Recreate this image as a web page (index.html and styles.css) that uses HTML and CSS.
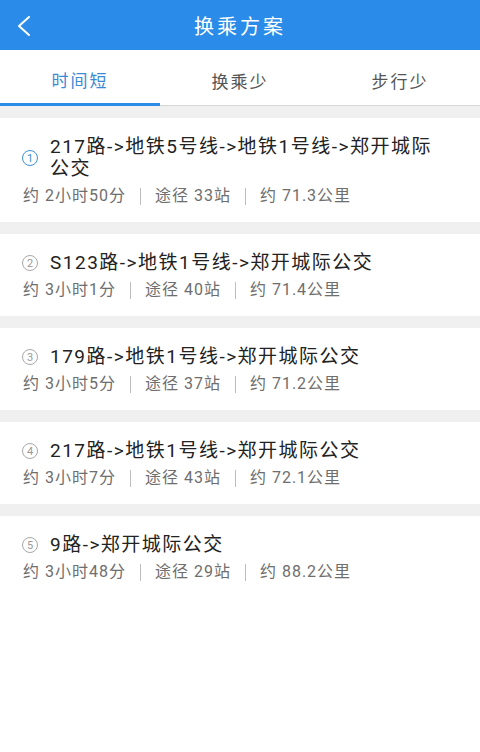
FILE: index.html
```html
<!DOCTYPE html>
<html>
  <head>
    <meta charset="UTF-8" />
    <title>换乘方案</title>
    <link rel="stylesheet" href="styles.css">
  </head>
  <body>
    <div class="header">
      <div class="back">
        <svg width="16" height="22" viewBox="0 0 16 22">
          <polyline points="13,2 3,11 13,20" fill="none" stroke="#fff" stroke-width="2" stroke-linecap="round" stroke-linejoin="round" />
        </svg>
      </div>
      <h1>换乘方案</h1>
      <div></div>
    </div>

    <div class="tabs">
      <div class="tab active">时间短</div>
      <div class="tab">换乘少</div>
      <div class="tab">步行少</div>
    </div>

    <div class="plans">
      <div class="card">
        <div class="route">
          <span class="num first">1</span>
          <span class="title">217路->地铁5号线->地铁1号线->郑开城际公交</span>
        </div>
        <div class="meta">
          <span>约 2小时50分</span><span class="sep"></span><span>途径 33站</span><span class="sep"></span><span>约 71.3公里</span>
        </div>
      </div>

      <div class="card">
        <div class="route">
          <span class="num">2</span>
          <span class="title">S123路->地铁1号线->郑开城际公交</span>
        </div>
        <div class="meta">
          <span>约 3小时1分</span><span class="sep"></span><span>途径 40站</span><span class="sep"></span><span>约 71.4公里</span>
        </div>
      </div>

      <div class="card">
        <div class="route">
          <span class="num">3</span>
          <span class="title">179路->地铁1号线->郑开城际公交</span>
        </div>
        <div class="meta">
          <span>约 3小时5分</span><span class="sep"></span><span>途径 37站</span><span class="sep"></span><span>约 71.2公里</span>
        </div>
      </div>

      <div class="card">
        <div class="route">
          <span class="num">4</span>
          <span class="title">217路->地铁1号线->郑开城际公交</span>
        </div>
        <div class="meta">
          <span>约 3小时7分</span><span class="sep"></span><span>途径 43站</span><span class="sep"></span><span>约 72.1公里</span>
        </div>
      </div>

      <div class="card">
        <div class="route">
          <span class="num">5</span>
          <span class="title">9路->郑开城际公交</span>
        </div>
        <div class="meta">
          <span>约 3小时48分</span><span class="sep"></span><span>途径 29站</span><span class="sep"></span><span>约 88.2公里</span>
        </div>
      </div>
    </div>
  </body>
</html>
```

FILE: styles.css
```css
body {
  margin: 0;
  background-color: #fff;
  font-family: Roboto, "Noto Sans CJK SC", sans-serif;
}

.header {
  display: grid;
  grid-template-columns: 1fr auto 1fr;
  align-items: center;
  height: 50px;
  background-color: #2a8ce8;
}

.header .back {
  display: flex;
  padding-left: 16px;
  padding-top: 2px;
}

.header h1 {
  margin: 0;
  color: #fff;
  font-size: 20px;
  font-weight: normal;
  letter-spacing: 3px;
}

.tabs {
  display: flex;
  background-color: #fff;
}

.tab {
  flex: 1;
  height: 56px;
  box-sizing: border-box;
  padding-top: 5px;
  display: flex;
  align-items: center;
  justify-content: center;
  font-size: 17px;
  letter-spacing: 2px;
  color: #555;
  border-bottom: 1px solid #d6d6d6;
}

.tab.active {
  color: #3b8ad6;
  border-bottom: 3px solid #2a8ce8;
}

.plans {
  background-color: #f0f0f0;
  padding-top: 12px;
}

.card {
  background-color: #fff;
  margin-bottom: 12px;
  padding: 18px 36px 16px 22px;
}

.route {
  display: flex;
  align-items: center;
  gap: 12px;
}

.num {
  flex: none;
  width: 14px;
  height: 14px;
  border: 1.5px solid #a8a8a8;
  border-radius: 50%;
  display: flex;
  align-items: center;
  justify-content: center;
  font-size: 11px;
  line-height: 1;
  color: #999;
}

.num.first {
  border-color: #3d8fdc;
  color: #3d8fdc;
}

.title {
  font-size: 19px;
  letter-spacing: 1.5px;
  line-height: 22px;
  color: #222;
}

.meta {
  display: flex;
  align-items: center;
  margin-top: 6px;
  padding-left: 1px;
  font-size: 16px;
  letter-spacing: 1px;
  line-height: 20px;
  color: #6e6e6e;
}

.sep {
  width: 1px;
  height: 17px;
  margin: 0 14px;
  background-color: #bdbdbd;
}
```
